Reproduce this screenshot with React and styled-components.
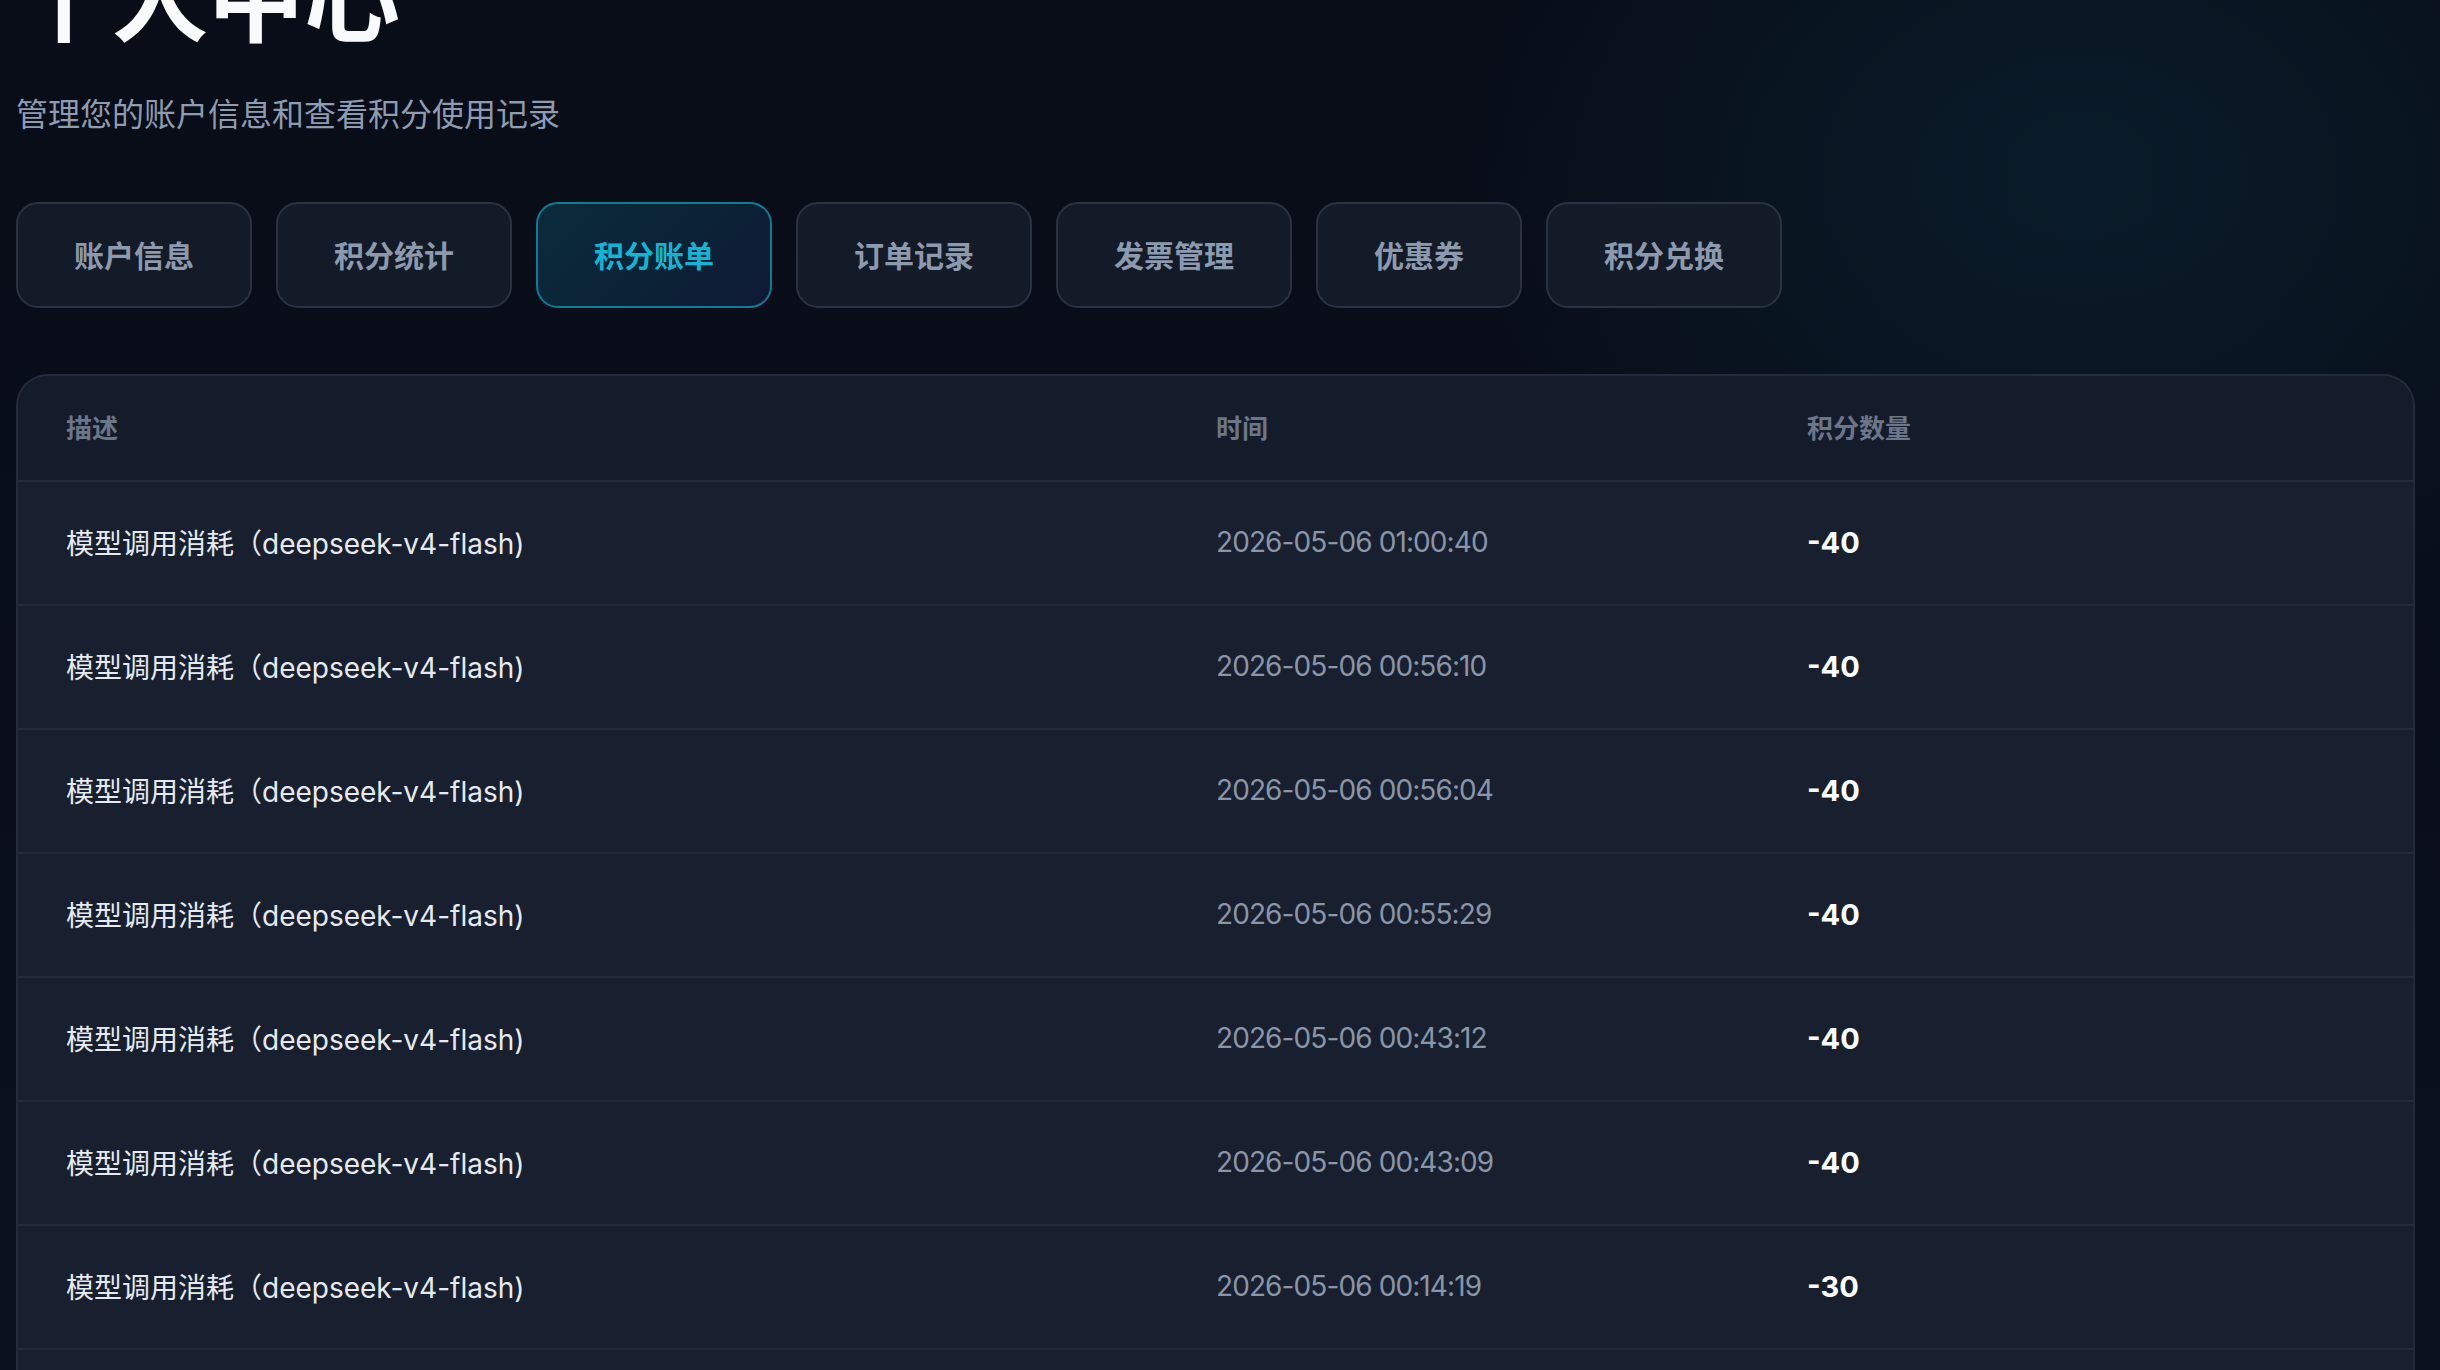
import React from "react";
import styled, { createGlobalStyle } from "styled-components";

const GlobalStyle = createGlobalStyle`
  html, body {
    margin: 0;
    padding: 0;
    height: 100%;
    overflow: hidden;
    background: #090e19;
  }
  body {
    font-family: Inter, "Noto Sans CJK SC", "Noto Sans", sans-serif;
    -webkit-font-smoothing: antialiased;
  }
  #root { min-height: 100%; }
  * { box-sizing: border-box; }
`;

const Page = styled.div`
  height: 1370px;
  overflow: hidden;
  padding: 0 25px 0 16px;
  background:
    radial-gradient(ellipse 900px 700px at 2080px 170px, rgba(12, 48, 66, 0.42), rgba(12, 48, 66, 0) 70%),
    linear-gradient(180deg, #080d18 0%, #0a101c 100%);
`;

const Header = styled.header`
  display: flex;
  flex-direction: column;
`;

const Title = styled.h1`
  margin: -55px 0 0;
  font-family: "Noto Sans CJK SC", sans-serif;
  font-size: 96px;
  line-height: 1;
  font-weight: 700;
  color: #f8fafc;
`;

const Subtitle = styled.p`
  margin: 50px 0 0;
  font-size: 32px;
  line-height: 48px;
  color: #8f9bb0;
`;

const Tabs = styled.nav`
  display: flex;
  gap: 24px;
  margin-top: 63px;
`;

const Tab = styled.button`
  height: 106px;
  padding: 0 56px 2px;
  border-radius: 22px;
  border: 2px solid ${(p) => (p.$active ? "#0b7d96" : "#2a3342")};
  background: ${(p) =>
    p.$active
      ? "linear-gradient(135deg, #0a2b3c 0%, #0c2236 55%, #0f1a36 100%)"
      : "#131b29"};
  color: ${(p) => (p.$active ? "#13b5d4" : "#8d99ad")};
  font-family: "Noto Sans CJK SC", sans-serif;
  font-size: 30px;
  font-weight: 700;
  line-height: 1;
  display: flex;
  align-items: center;
  justify-content: center;
  cursor: pointer;
`;

const Card = styled.section`
  margin-top: 66px;
  border: 2px solid #232c3b;
  border-bottom: none;
  border-radius: 32px 32px 0 0;
  overflow: hidden;
  background: #18202f;
`;

const Row = styled.div`
  display: grid;
  grid-template-columns: 1150px 591px 1fr;
  align-items: center;
  height: ${(p) => (p.$head ? "104px" : "124px")};
  background: ${(p) => (p.$head ? "#141c2b" : "#18202f")};
  border-top: ${(p) => (p.$head ? "none" : "2px solid #222b3a")};
`;

const HeadCell = styled.div`
  padding: 0 48px 4px;
  font-family: "Noto Sans CJK SC", sans-serif;
  font-size: 26px;
  font-weight: 700;
  color: #6b7688;
`;

const Cell = styled.div`
  padding: 0 48px 2px;
  font-size: ${(p) => (p.$strong ? "29px" : "28px")};
  font-weight: ${(p) => (p.$strong ? 700 : 400)};
  letter-spacing: ${(p) => p.$tight || "0"};
  color: ${(p) => p.$color || "#e6eaf0"};
  white-space: nowrap;
`;

const tabs = ["账户信息", "积分统计", "积分账单", "订单记录", "发票管理", "优惠券", "积分兑换"];

const records = [
  ["2026-05-06 01:00:40", "-40"],
  ["2026-05-06 00:56:10", "-40"],
  ["2026-05-06 00:56:04", "-40"],
  ["2026-05-06 00:55:29", "-40"],
  ["2026-05-06 00:43:12", "-40"],
  ["2026-05-06 00:43:09", "-40"],
  ["2026-05-06 00:14:19", "-30"],
  ["2026-05-06 00:12:47", "-40"],
];

export default function App() {
  return (
    <>
      <GlobalStyle />
      <Page>
        <Header>
          <Title>个人中心</Title>
          <Subtitle>管理您的账户信息和查看积分使用记录</Subtitle>
        </Header>
        <Tabs>
          {tabs.map((t) => (
            <Tab key={t} $active={t === "积分账单"}>
              {t}
            </Tab>
          ))}
        </Tabs>
        <Card>
          <Row $head>
            <HeadCell>描述</HeadCell>
            <HeadCell>时间</HeadCell>
            <HeadCell>积分数量</HeadCell>
          </Row>
          {records.map(([time, value], i) => (
            <Row key={i}>
              <Cell>模型调用消耗（deepseek-v4-flash)</Cell>
              <Cell $color="#8a95a8" $tight="-0.9px">{time}</Cell>
              <Cell $strong $color="#ffffff">{value}</Cell>
            </Row>
          ))}
        </Card>
      </Page>
    </>
  );
}
